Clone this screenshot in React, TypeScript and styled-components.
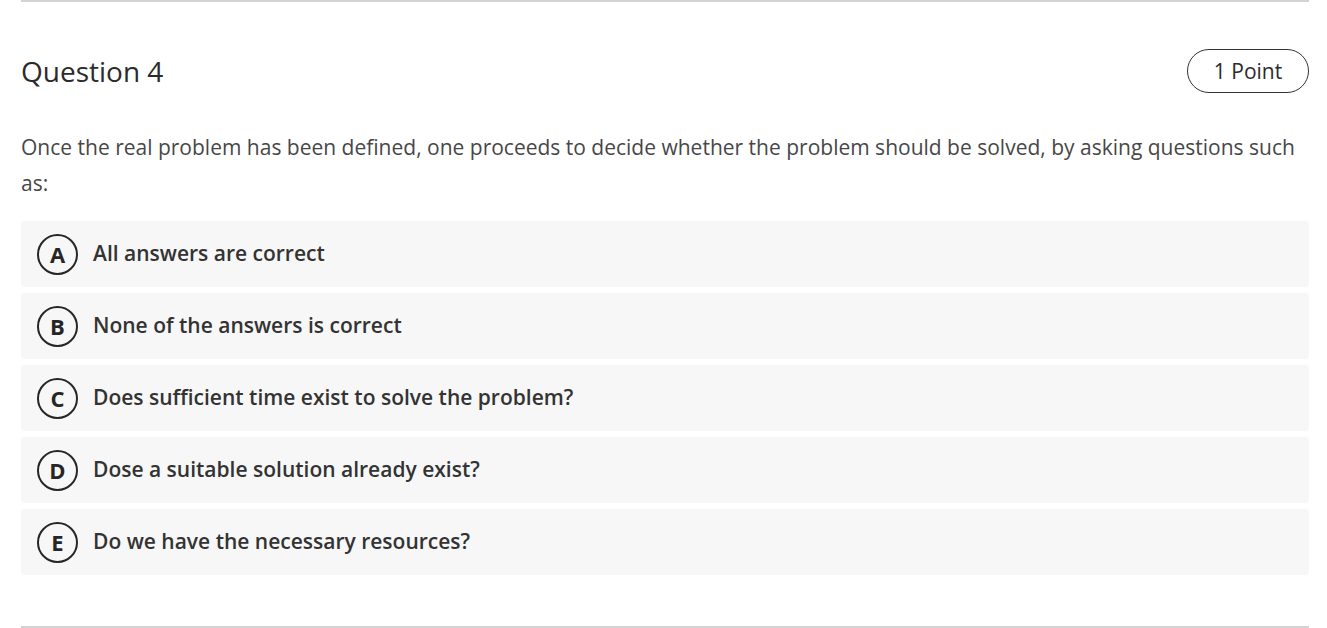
import React from 'react'
import styled, { createGlobalStyle } from 'styled-components'

const GlobalStyle = createGlobalStyle`
  body {
    margin: 0;
    background: #fff;
    font-family: "Open Sans", "Noto Sans", sans-serif;
    color: #333;
  }
`

const Page = styled.div`
  padding: 0 18px 0 21px;
`

const Rule = styled.hr`
  margin: 0;
  border: 0;
  border-top: 2px solid #d4d4d4;
`

const Header = styled.div`
  display: flex;
  align-items: center;
  justify-content: space-between;
  margin-top: 47px;
`

const Title = styled.h2`
  margin: 0;
  font-size: 28px;
  font-weight: 400;
  color: #2b2b2b;
`

const Pill = styled.div`
  height: 44px;
  width: 122px;
  box-sizing: border-box;
  border: 1px solid #333;
  border-radius: 22px;
  display: flex;
  align-items: center;
  justify-content: center;
  font-size: 21px;
  color: #2b2b2b;
`

const Prompt = styled.p`
  margin: 36px 0 20px;
  font-size: 21px;
  line-height: 36px;
  color: #474747;
`

const Options = styled.div`
  display: flex;
  flex-direction: column;
  gap: 6px;
  margin-bottom: 51px;
`

const Option = styled.div`
  height: 66px;
  display: flex;
  align-items: center;
  gap: 15px;
  padding-left: 16px;
  background: #f7f7f7;
  border-radius: 4px;
`

const Letter = styled.span`
  width: 41px;
  height: 41px;
  box-sizing: border-box;
  border: 2.5px solid #262626;
  border-radius: 50%;
  display: flex;
  align-items: center;
  justify-content: center;
  font-size: 22px;
  font-weight: 700;
  color: #262626;
`

const Label = styled.span`
  font-size: 21px;
  line-height: 28px;
  font-weight: 600;
  color: #333;
  margin-top: -2px;
`

const answers = [
  { key: 'A', text: 'All answers are correct' },
  { key: 'B', text: 'None of the answers is correct' },
  { key: 'C', text: 'Does sufficient time exist to solve the problem?' },
  { key: 'D', text: 'Dose a suitable solution already exist?' },
  { key: 'E', text: 'Do we have the necessary resources?' }
]

const App: React.FunctionComponent = () => {
  return (
    <>
      <GlobalStyle />
      <Page>
        <Rule />
        <Header>
          <Title>Question 4</Title>
          <Pill>1 Point</Pill>
        </Header>
        <Prompt>
          Once the real problem has been defined, one proceeds to decide whether the problem should be solved, by asking questions such as:
        </Prompt>
        <Options>
          {answers.map(a => (
            <Option key={a.key}>
              <Letter>{a.key}</Letter>
              <Label>{a.text}</Label>
            </Option>
          ))}
        </Options>
        <Rule />
      </Page>
    </>
  )
}

export default App
